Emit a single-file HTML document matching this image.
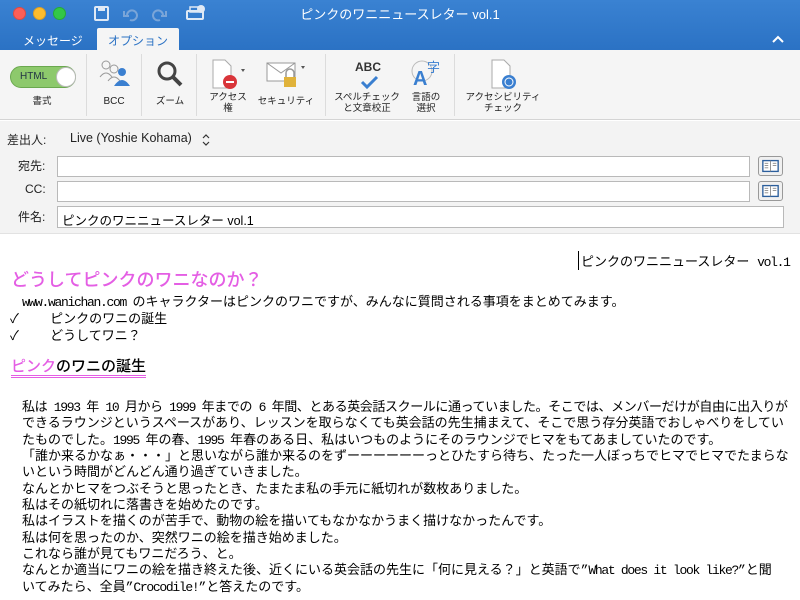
<!DOCTYPE html>
<html><head><meta charset="utf-8"><style>
*{margin:0;padding:0;box-sizing:border-box}
body{width:800px;height:600px;overflow:hidden;background:#fff;font-family:"Liberation Sans","Noto Sans CJK JP",sans-serif;position:relative}
.abs{position:absolute}
#top{left:0;top:0;width:800px;height:50px;background:linear-gradient(#3a82d2,#2b72c4)}
.dot{position:absolute;top:7px;width:13px;height:13px;border-radius:50%}
.tab{position:absolute;font-size:12px;color:#fff}
#ribbon{left:0;top:50px;width:800px;height:70px;background:#f5f5f5;border-bottom:1px solid #d4d4d4}
.lbl{position:absolute;font-size:9.5px;color:#222;text-align:center;line-height:11px}
.sep{position:absolute;top:4px;width:1px;height:62px;background:#dcdcdc}
#hdr{left:0;top:121px;width:800px;height:113px;background:#f3f3f3;border-bottom:1px solid #e2e2e2}
.fl{position:absolute;font-size:12px;color:#222}
.inp{position:absolute;left:57px;height:21px;background:#fff;border:1px solid #b9b9b9}
.book{position:absolute;left:758px;width:25px;height:20px;border:1px solid #999;border-radius:3px;background:#f0f0f0}
.bd{font-family:"Liberation Mono","Noto Sans CJK JP",monospace;font-size:13px;color:#000;white-space:nowrap;position:absolute}
.l{letter-spacing:-1.3px}
</style></head><body>
<div id="top" class="abs">
<div class="dot" style="left:13px;background:#fc5f57;border:1px solid #de4a42"></div>
<div class="dot" style="left:33px;background:#fdbc2e;border:1px solid #dea024"></div>
<div class="dot" style="left:53px;background:#33c748;border:1px solid #27aa35"></div>
<svg class="abs" style="left:93px;top:5px" width="120" height="18"><rect x="2" y="2" width="13" height="13" rx="1" fill="none" stroke="#dfe9f5" stroke-width="2"/><rect x="5" y="2" width="7" height="4" fill="#dfe9f5"/><path d="M34 10 a5 5 0 1 1 3 5 M31 6 v5 h5" fill="none" stroke="#7aa5d8" stroke-width="2"/><path d="M70 10 a5 5 0 1 0 -3 5 M73 6 v5 h-5" fill="none" stroke="#7aa5d8" stroke-width="2"/><rect x="94" y="6" width="16" height="8" rx="1" fill="none" stroke="#dfe9f5" stroke-width="2"/><rect x="97" y="2" width="9" height="5" fill="none" stroke="#dfe9f5" stroke-width="1.5"/><circle cx="108" cy="4" r="4" fill="#dfe9f5"/></svg>
<div class="abs" style="left:0;width:800px;top:4px;text-align:center;color:#fff;font-size:13px">ピンクのワニニュースレター vol.1</div>
<div class="tab" style="left:23px;top:32px">メッセージ</div>
<div class="abs" style="left:97px;top:28px;width:82px;height:22px;background:#f5f5f5;border-radius:2px 2px 0 0"></div>
<div class="tab" style="left:108px;top:32px;color:#2b72c4">オプション</div>
<svg class="abs" style="left:771px;top:34px" width="14" height="10"><path d="M2 8 l5 -5 5 5" fill="none" stroke="#fff" stroke-width="2"/></svg>
</div>
<div id="ribbon" class="abs">
<div class="abs" style="left:10px;top:16px;width:66px;height:22px;border-radius:11px;background:#8dc96c;border:1px solid #6aa84f;font-size:10px;color:#234;padding:4px 0 0 9px">HTML</div>
<div class="abs" style="left:56px;top:17px;width:20px;height:20px;border-radius:50%;background:#fff;border:1px solid #bbb"></div>
<div class="lbl" style="left:30px;top:46px;width:24px">書式</div>
<div class="sep" style="left:86px"></div>
<svg class="abs" style="left:98px;top:9px" width="32" height="28"><circle cx="8" cy="6" r="4" fill="none" stroke="#999"/><circle cx="16" cy="10" r="4" fill="none" stroke="#999"/><path d="M2 18 q6 -8 12 0 M10 22 q6 -8 12 0" fill="none" stroke="#999"/><circle cx="24" cy="13" r="4" fill="#3a7fd0"/><path d="M16 27 q8 -12 16 0z" fill="#3a7fd0"/></svg>
<div class="lbl" style="left:100px;top:46px;width:28px;font-size:10px">BCC</div>
<div class="sep" style="left:141px"></div>
<svg class="abs" style="left:155px;top:9px" width="30" height="30"><circle cx="12" cy="12" r="8" fill="none" stroke="#444" stroke-width="3"/><path d="M18 18 l8 8" stroke="#444" stroke-width="4"/></svg>
<div class="lbl" style="left:150px;top:46px;width:40px">ズーム</div>
<div class="sep" style="left:196px"></div>
<svg class="abs" style="left:211px;top:8px" width="40" height="32"><path d="M2 2 h12 l6 6 v22 h-18z" fill="#fff" stroke="#aaa"/><circle cx="19" cy="24" r="7" fill="#d9353a"/><rect x="15" y="23" width="8" height="2" fill="#fff"/><path d="M30 11 l4 0 -2 3z" fill="#555"/></svg>
<div class="lbl" style="left:205px;top:42px;width:46px">アクセス<br>権</div>
<svg class="abs" style="left:266px;top:12px" width="42" height="30"><rect x="1" y="1" width="28" height="18" fill="#fff" stroke="#999"/><path d="M1 1 l14 10 14 -10" fill="none" stroke="#999"/><rect x="18" y="15" width="12" height="10" fill="#e0b23a"/><path d="M20 15 v-4 a4 4 0 0 1 8 0 v4" fill="none" stroke="#999" stroke-width="1.5"/><path d="M35 4 l4 0 -2 3z" fill="#555"/></svg>
<div class="lbl" style="left:256px;top:46px;width:60px">セキュリティ</div>
<div class="sep" style="left:325px"></div>
<div class="abs" style="left:355px;top:10px;font-size:12px;font-weight:bold;color:#333">ABC</div>
<svg class="abs" style="left:360px;top:25px" width="20" height="14"><path d="M2 7 l5 5 10 -10" fill="none" stroke="#3a7fd0" stroke-width="3"/></svg>
<div class="lbl" style="left:332px;top:42px;width:70px">スペルチェック<br>と文章校正</div>
<svg class="abs" style="left:410px;top:8px" width="34" height="30"><circle cx="12" cy="13" r="10" fill="none" stroke="#bbb"/><text x="3" y="27" font-size="20" font-weight="bold" fill="#3a7fd0" font-family="Liberation Sans">A</text><text x="17" y="14" font-size="13" fill="#3a7fd0" font-family="Noto Sans CJK JP">字</text></svg>
<div class="lbl" style="left:408px;top:42px;width:36px">言語の<br>選択</div>
<div class="sep" style="left:454px"></div>
<svg class="abs" style="left:490px;top:8px" width="30" height="32"><path d="M2 2 h12 l6 6 v22 h-18z" fill="#fff" stroke="#aaa"/><circle cx="19" cy="24" r="7" fill="#3a7fd0"/><circle cx="19" cy="24" r="4" fill="none" stroke="#fff"/></svg>
<div class="lbl" style="left:460px;top:42px;width:86px">アクセシビリティ<br>チェック</div>
</div>
<div id="hdr" class="abs">
<div class="fl" style="left:7px;top:10px">差出人:</div>
<div class="fl" style="left:70px;top:10px;font-size:12.5px">Live (Yoshie Kohama)</div>
<svg class="abs" style="left:201px;top:12px" width="10" height="14"><path d="M2 5 l3 -3 3 3 M2 9 l3 3 3 -3" fill="none" stroke="#333" stroke-width="1.2"/></svg>
<div class="fl" style="left:18px;top:36px">宛先:</div>
<div class="inp" style="top:35px;width:693px"></div>
<svg class="book" style="top:35px" viewBox="0 0 25 20"><rect x="4" y="4" width="17" height="12" fill="#fff" stroke="#2b5e9c" stroke-width="1.5"/><path d="M12.5 4 v12 M6 7 h4 M6 9.5 h4 M6 12 h4 M15 7 h4 M15 9.5 h4" stroke="#888" stroke-width="1"/></svg>
<div class="fl" style="left:25px;top:61px">CC:</div>
<div class="inp" style="top:60px;width:693px"></div>
<svg class="book" style="top:60px" viewBox="0 0 25 20"><rect x="4" y="4" width="17" height="12" fill="#fff" stroke="#2b5e9c" stroke-width="1.5"/><path d="M12.5 4 v12 M6 7 h4 M6 9.5 h4 M6 12 h4 M15 7 h4 M15 9.5 h4" stroke="#888" stroke-width="1"/></svg>
<div class="fl" style="left:18px;top:87px">件名:</div>
<div class="inp" style="top:85px;width:727px;height:22px;font-size:12.5px;padding:3px 0 0 4px">ピンクのワニニュースレター vol.1</div>
</div>
<div class="bd" style="left:578px;top:251px;border-left:1px solid #000;padding-left:2px">ピンクのワニニュースレター <span class="l">vol.1</span></div>
<div class="abs" style="left:11px;top:266px;font-size:18px;color:#e45ee4;font-family:'Noto Sans CJK JP',sans-serif;white-space:nowrap;font-weight:500">どうしてピンクのワニなのか？</div>
<div class="bd" style="left:22px;top:291px"><span class="l">www.wanichan.com </span>のキャラクターはピンクのワニですが、みんなに質問される事項をまとめてみます。</div>
<div class="bd" style="left:10px;top:308px">✓&nbsp;&nbsp;&nbsp;&nbsp;ピンクのワニの誕生</div>
<div class="bd" style="left:10px;top:325px">✓&nbsp;&nbsp;&nbsp;&nbsp;どうしてワニ？</div>
<div class="abs" style="left:11px;top:357px;font-size:15px;font-family:'Noto Sans CJK JP',sans-serif;white-space:nowrap;border-bottom:3px double #e45ee4;line-height:18px;font-weight:500"><span style="color:#e45ee4">ピンク</span>のワニの誕生</div>
<div class="bd" style="left:22px;top:400px;line-height:16.35px"><span style="letter-spacing:-0.4px">私は<span class="l"> 1993 </span>年<span class="l"> 10 </span>月から<span class="l"> 1999 </span>年までの<span class="l"> 6 </span>年間、とある英会話スクールに通っていました。そこでは、メンバーだけが自由に出入りが</span><br>できるラウンジというスペースがあり、レッスンを取らなくても英会話の先生捕まえて、そこで思う存分英語でおしゃべりをしてい<br>たものでした。<span class="l">1995 </span>年の春、<span class="l">1995 </span>年春のある日、私はいつものようにそのラウンジでヒマをもてあましていたのです。<br>「誰か来るかなぁ・・・」と思いながら誰か来るのをずーーーーーーっとひたすら待ち、たった一人ぼっちでヒマでヒマでたまらな<br>いという時間がどんどん通り過ぎていきました。<br>なんとかヒマをつぶそうと思ったとき、たまたま私の手元に紙切れが数枚ありました。<br>私はその紙切れに落書きを始めたのです。<br>私はイラストを描くのが苦手で、動物の絵を描いてもなかなかうまく描けなかったんです。<br>私は何を思ったのか、突然ワニの絵を描き始めました。<br>これなら誰が見てもワニだろう、と。<br>なんとか適当にワニの絵を描き終えた後、近くにいる英会話の先生に「何に見える？」と英語で”<span class="l">What does it look like?</span>”と聞<br>いてみたら、全員”<span class="l">Crocodile!</span>”と答えたのです。</div>
</body></html>
